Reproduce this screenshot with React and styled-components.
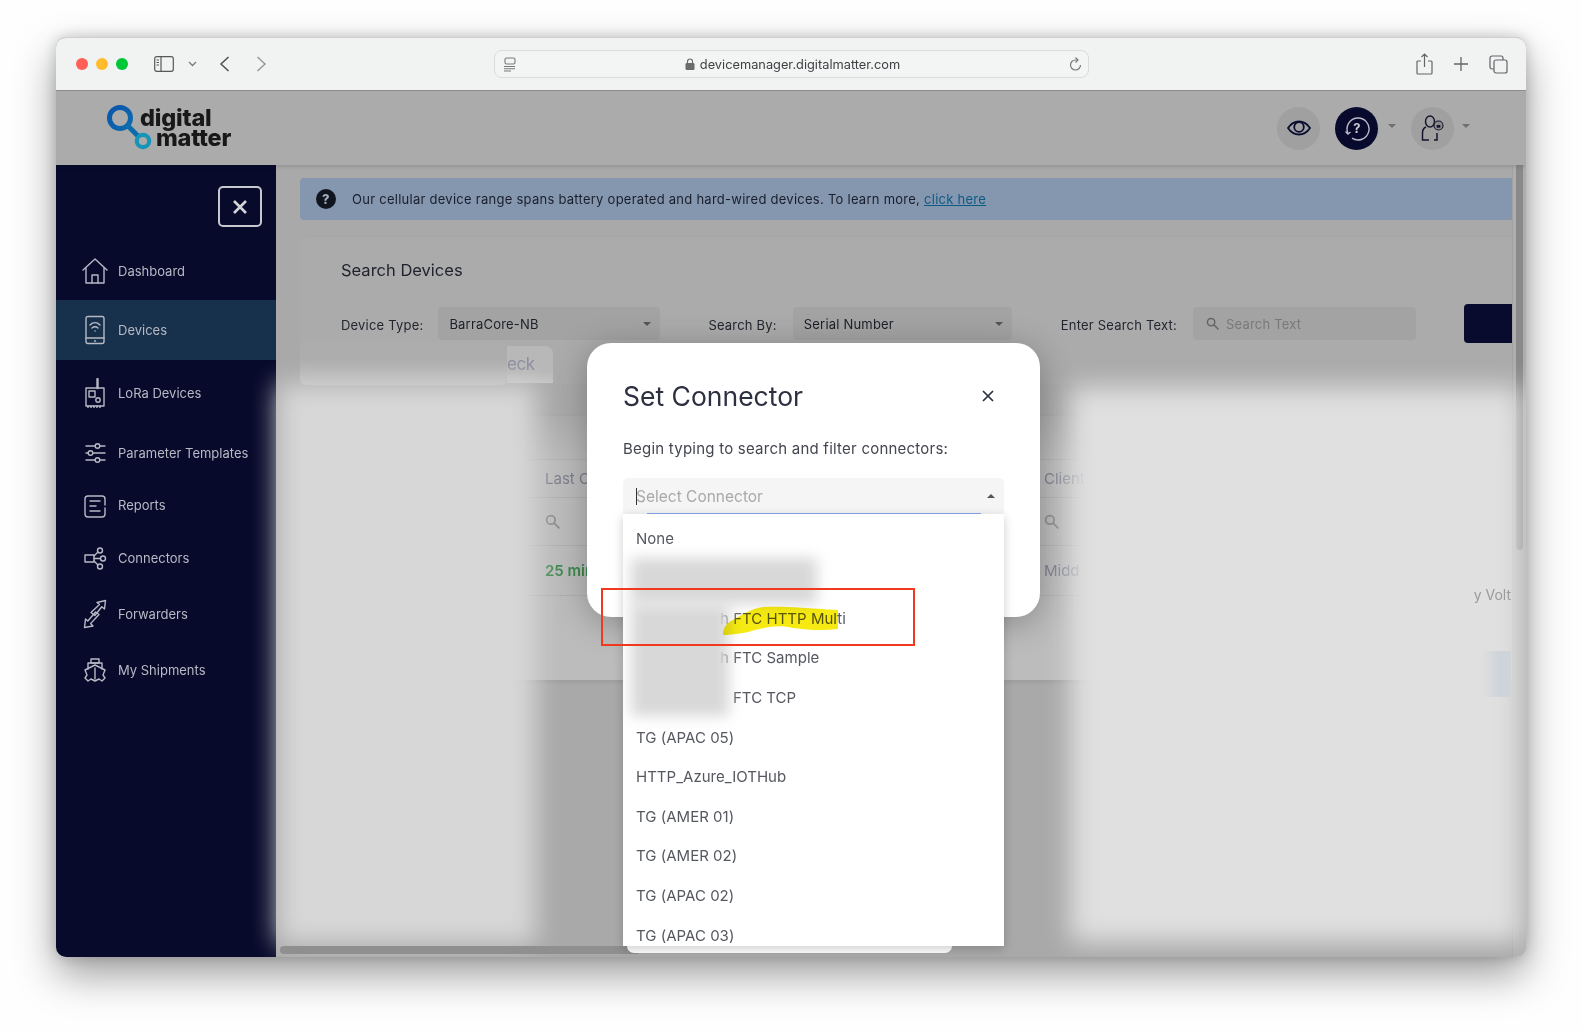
import React from "react";
import styled, { createGlobalStyle } from "styled-components";

const Global = createGlobalStyle`
  html, body {
    margin: 0;
    padding: 0;
    background: #fff;
    font-family: Inter, "Open Sans", "Liberation Sans", sans-serif;
  }
  * { box-sizing: border-box; }
`;

const Page = styled.div`
  width: 1582px;
  height: 1031px;
  padding: 37px 56px 0;
  background: #fefefe;
  overflow: hidden;
`;

const Window = styled.div`
  position: relative;
  width: 1470px;
  height: 920px;
  border-radius: 10px;
  overflow: hidden;
  display: flex;
  flex-direction: column;
  background: #b4b4b4;
`;

const WindowShadow = styled.div`
  width: 1470px;
  height: 920px;
  border-radius: 10px;
  box-shadow: 0 18px 42px rgba(0, 0, 0, 0.38), 0 0 14px rgba(0, 0, 0, 0.18);
`;

const Chrome = styled.div`
  height: 54px;
  flex: none;
  display: flex;
  align-items: center;
  background: #f1f3f2;
  border-bottom: 1px solid #8e8e8e;
  border-top: 1px solid #cfd1d0;
  border-radius: 10px 10px 0 0;
  padding: 0 0 0 20px;
  position: relative;
`;

const Lights = styled.div`
  display: flex;
  gap: 8px;
  margin-right: 26px;
`;

const Light = styled.span`
  width: 12px;
  height: 12px;
  border-radius: 50%;
  background: ${(p) => p.$color};
`;

const ChromeIcon = styled.svg`
  flex: none;
  margin-left: ${(p) => p.$ml || 0}px;
  display: block;
`;

const UrlBar = styled.div`
  position: absolute;
  left: 438px;
  top: 12px;
  width: 595px;
  height: 28px;
  border: 1px solid #d9dcdb;
  border-radius: 8px;
  background: #f3f5f4;
  display: flex;
  align-items: center;
  justify-content: center;
  gap: 5px;
  padding-left: 2px;
  font-size: 12.8px;
  color: #3d3f42;
`;

const UrlLeft = styled.span`
  position: absolute;
  left: 8px;
  top: 6px;
  display: flex;
`;

const UrlRight = styled.span`
  position: absolute;
  right: 5px;
  top: 5px;
  display: flex;
`;

const ChromeRight = styled.div`
  margin-left: auto;
  margin-right: 18px;
  display: flex;
  align-items: center;
  gap: 20px;
`;

const AppHeader = styled.header`
  height: 74px;
  flex: none;
  background: #ababab;
  display: flex;
  align-items: center;
  padding: 0 56px 0 50px;
  box-shadow: 0 2px 4px rgba(0, 0, 0, 0.12);
  position: relative;
  z-index: 2;
`;

const Logo = styled.div`
  display: flex;
  align-items: flex-start;
  position: relative;
  width: 130px;
  height: 48px;
`;

const LogoText = styled.div`
  position: absolute;
  left: ${(p) => p.$left}px;
  top: ${(p) => p.$top}px;
  font-family: Inter, sans-serif;
  font-weight: 800;
  font-size: 23.5px;
  line-height: 19px;
  letter-spacing: -0.2px;
  color: #181818;
`;

const HeaderRight = styled.div`
  margin-left: auto;
  display: flex;
  align-items: center;
`;

const RoundButton = styled.div`
  width: 43px;
  height: 43px;
  border-radius: 50%;
  background: ${(p) => (p.$dark ? "#080a2d" : "#a0a0a0")};
  display: flex;
  align-items: center;
  justify-content: center;
  margin-left: ${(p) => p.$ml || 0}px;
`;

const Caret = styled.span`
  width: 0;
  height: 0;
  margin: -4px 0 0 ${(p) => p.$ml || 10}px;
  border-left: 4px solid transparent;
  border-right: 4px solid transparent;
  border-top: 4px solid #6f6f6f;
`;

const Body = styled.div`
  flex: 1;
  display: flex;
  min-height: 0;
`;

const Sidebar = styled.nav`
  width: 220px;
  flex: none;
  background: #070a2b;
  display: flex;
  flex-direction: column;
`;

const SidebarTop = styled.div`
  height: 76px;
  padding: 21px 14px 0 0;
  display: flex;
  justify-content: flex-end;
`;

const CloseBox = styled.div`
  width: 44px;
  height: 41px;
  border: 2px solid #c8c9cf;
  border-radius: 5px;
  display: flex;
  align-items: center;
  justify-content: center;
`;

const NavItem = styled.div`
  height: ${(p) => p.$h}px;
  display: flex;
  align-items: center;
  padding-left: 26px;
  gap: 10px;
  font-size: 13px;
  color: #b7b9c4;
  background: ${(p) => (p.$active ? "#17304c" : "transparent")};
`;

const NavIcon = styled.svg`
  width: 26px;
  height: 30px;
  flex: none;
  fill: none;
  stroke: #b7b9c4;
  stroke-width: 1.4;
  stroke-linecap: round;
  stroke-linejoin: round;
`;

const Content = styled.main`
  flex: 1;
  display: flex;
  flex-direction: column;
  padding: 13px 0 0 24px;
  background: #a9a9a9;
  min-width: 0;
`;

const Banner = styled.div`
  height: 42px;
  flex: none;
  background: #8497ae;
  border-radius: 4px 0 0 4px;
  display: flex;
  align-items: center;
  padding-left: 16px;
  gap: 16px;
  font-size: 13px;
  letter-spacing: 0.26px;
  color: #1a1e2c;
  a {
    color: #0d5a86;
    text-decoration: underline;
  }
`;

const HelpDot = styled.span`
  width: 20px;
  height: 20px;
  border-radius: 50%;
  background: #11151f;
  color: #a4b0c0;
  font-size: 13px;
  font-weight: 800;
  display: flex;
  align-items: center;
  justify-content: center;
`;

const SearchCard = styled.section`
  margin-top: 16px;
  height: 148px;
  flex: none;
  background: #ababab;
  border-radius: 8px 0 0 0;
  border-top: 1px solid #a6a6a6;
  padding: 18px 0 0 41px;
`;

const CardTitle = styled.h2`
  margin: 0 0 19px;
  font-size: 16.5px;
  line-height: 30px;
  font-weight: 400;
  color: #20232e;
`;

const FilterRow = styled.div`
  display: flex;
  align-items: center;
`;

const FilterLabel = styled.label`
  font-size: 13px;
  letter-spacing: 0.2px;
  color: #23262f;
  padding-top: 2px;
  margin-left: ${(p) => p.$ml || 0}px;
  margin-right: ${(p) => p.$mr}px;
`;

const SelectBox = styled.div`
  width: ${(p) => p.$w}px;
  height: 33px;
  background: #a3a3a3;
  border-radius: 4px;
  display: flex;
  align-items: center;
  justify-content: space-between;
  padding: 0 9px 0 11px;
  font-size: 13px;
  letter-spacing: 0.2px;
  color: #1c1f28;
`;

const SelectArrow = styled.span`
  width: 0;
  height: 0;
  border-left: 4px solid transparent;
  border-right: 4px solid transparent;
  border-top: 4px solid #555;
`;

const SearchField = styled(SelectBox)`
  justify-content: flex-start;
  gap: 7px;
  padding-left: 13px;
  color: #797979;
`;

const SearchGo = styled.div`
  width: 48px;
  height: 39px;
  margin-left: 48px;
  background: #090b2e;
  border-radius: 4px 0 0 4px;
`;

const TableCard = styled.section`
  margin-top: 32px;
  height: 264px;
  flex: none;
  background: linear-gradient(#acacac, #bcbcbc 18%, #bcbcbc);
  box-shadow: 0 2px 5px rgba(0, 0, 0, 0.08);
  display: flex;
  flex-direction: column;
  justify-content: flex-end;
`;

const TableRow = styled.div`
  height: ${(p) => p.$h}px;
  flex: none;
  display: grid;
  grid-template-columns: 245px 499px 1fr;
  align-items: center;
  border-top: 1px solid #b0b0b0;
  font-size: 15px;
  color: #7d7f8e;
`;

const TableCell = styled.div`
  grid-column: ${(p) => p.$col};
  display: flex;
  color: ${(p) => p.$color || "inherit"};
  font-weight: ${(p) => p.$weight || 400};
`;

const ScrollTrack = styled.div`
  width: 14px;
  flex: none;
  background: #aeaeae;
  border-left: 1px solid #a2a2a2;
  padding: 0 3px;
`;

const ScrollThumb = styled.div`
  height: 385px;
  background: #8a8a8a;
  border-radius: 0 0 4px 4px;
`;

/* smudges the screenshot's author painted over the page */
const LeftSmear = styled.div`
  position: absolute;
  left: 222px;
  top: 347px;
  width: 258px;
  height: 560px;
  background: #d7d7d7;
  filter: blur(13px);
`;

const RightSmear = styled.div`
  position: absolute;
  left: 1014px;
  top: 350px;
  width: 452px;
  height: 555px;
  background: #e0e0e0;
  filter: blur(13px);
`;

const CardPatch = styled.div`
  position: absolute;
  left: 244px;
  top: 303px;
  width: 207px;
  height: 45px;
  background: linear-gradient(#acacac, #adadad 40%, #bcbcbc);
  border-radius: 0 0 6px 6px;
`;

const GhostButton = styled.div`
  position: absolute;
  left: 451px;
  top: 309px;
  width: 46px;
  height: 37px;
  background: linear-gradient(#b8b8b8, #b8b8b8 70%, #c4c4c4);
  border-radius: 0 8px 0 0;
  font-size: 17px;
  letter-spacing: -0.4px;
  color: #8b8d9e;
  line-height: 37px;
`;

const EdgeText = styled.div`
  position: absolute;
  right: 15px;
  top: 549px;
  font-size: 14px;
  color: #9a9a9a;
  white-space: nowrap;
`;

const EdgeRow = styled.div`
  position: absolute;
  left: 1425px;
  top: 614px;
  width: 30px;
  height: 46px;
  background: linear-gradient(90deg, rgba(205, 210, 216, 0), #cfd4da 60%);
`;

const BottomBar = styled.div`
  position: absolute;
  left: 224px;
  bottom: 3px;
  width: 360px;
  height: 8px;
  background: #8f8f8f;
  border-radius: 4px;
`;

const Modal = styled.div`
  position: absolute;
  left: 531px;
  top: 306px;
  width: 453px;
  height: 274px;
  background: #fff;
  border-radius: 24px;
  padding: 36px 36px 0;
  box-shadow: 0 6px 34px rgba(0, 0, 0, 0.28);
`;

const ModalHead = styled.div`
  display: flex;
  align-items: center;
  justify-content: space-between;
  height: 34px;
  margin-bottom: 26px;
  padding-right: 10px;
`;

const ModalTitle = styled.h3`
  margin: 0;
  font-size: 26.5px;
  font-weight: 400;
  color: #2c3040;
`;

const ModalHint = styled.p`
  margin: 0 0 19px;
  font-size: 15px;
  line-height: 20px;
  letter-spacing: 0.23px;
  color: #444650;
`;

const SelectWrap = styled.div`
  position: relative;
  width: 381px;
`;

const ConnectorInput = styled.div`
  height: 36px;
  background: #f5f5f5;
  border-radius: 5px 5px 0 0;
  display: flex;
  align-items: center;
  padding: 0 9px 0 13px;
  font-size: 15.5px;
  color: #a9a9a9;
  position: relative;
  &::after {
    content: "";
    position: absolute;
    left: 24px;
    right: 23px;
    bottom: -1px;
    height: 2px;
    background: #86a6ee;
  }
`;

const TextCaret = styled.span`
  width: 1px;
  height: 17px;
  background: #333;
  margin-right: -1px;
`;

const UpArrow = styled.span`
  margin-left: auto;
  width: 0;
  height: 0;
  border-left: 4px solid transparent;
  border-right: 4px solid transparent;
  border-bottom: 4px solid #555;
`;

const Dropdown = styled.div`
  position: relative;
  height: 432px;
  overflow: hidden;
  background: #fff;
  padding-top: 5px;
  box-shadow: 0 3px 10px rgba(0, 0, 0, 0.2);
`;

const Option = styled.div`
  height: 39.65px;
  display: flex;
  align-items: center;
  padding-left: ${(p) => p.$pl || 13}px;
  font-size: 15px;
  letter-spacing: 0.02px;
  color: #565860;
`;

const OptionSmudge = styled.div`
  position: absolute;
  left: ${(p) => p.$left}px;
  top: ${(p) => p.$top}px;
  width: ${(p) => p.$w}px;
  height: ${(p) => p.$h}px;
  background: #d8d8d8;
  filter: blur(7px);
`;

const DropdownFoot = styled.div`
  position: absolute;
  left: 571px;
  top: 909px;
  width: 325px;
  height: 7px;
  background: #fff;
  border-radius: 0 0 10px 10px;
`;

const RedBox = styled.div`
  position: absolute;
  left: 545px;
  top: 551px;
  width: 314px;
  height: 58px;
  border: 2px solid #f0391f;
  pointer-events: none;
`;

const Highlighter = styled.svg`
  position: absolute;
  left: 667px;
  top: 566px;
  mix-blend-mode: multiply;
  pointer-events: none;
`;

const Caption = styled.span`
  white-space: nowrap;
`;

const SearchGlyph = ({ color = "#666", size = 13 }) => (
  <svg width={size} height={size} viewBox="0 0 14 14" fill="none" stroke={color} strokeWidth="1.6">
    <circle cx="5.5" cy="5.5" r="4" />
    <path d="M8.5 8.5 13 13" strokeLinecap="round" />
  </svg>
);

const navItems = [
  {
    label: "Dashboard",
    h: 59,
    icon: (
      <>
        <path d="M1 14 13 3l12 11" />
        <path d="M4 12v15h18V12" />
        <path d="M10 27v-8h6v8" />
      </>
    ),
  },
  {
    label: "Devices",
    h: 60,
    active: true,
    icon: (
      <>
        <rect x="4" y="1.5" width="18" height="27" rx="2" />
        <path d="M4 23h18" />
        <path d="M12.5 26h1" />
        <path d="M8 10c3-3 7-3 10 0M10 13c2-1.7 4-1.7 6 0" />
        <path d="M13 16h.1" />
      </>
    ),
  },
  {
    label: "LoRa Devices",
    h: 65,
    icon: (
      <>
        <path d="M15.5 1v9" strokeWidth="2.4" />
        <path d="M4 10h18v18H4z" />
        <rect x="7" y="13" width="6" height="6" />
        <circle cx="16" cy="22" r="2.2" />
        <path d="M6 28v2M9 28v2M12 28v2M15 28v2M18 28v2" />
      </>
    ),
  },
  {
    label: "Parameter Templates",
    h: 56,
    icon: (
      <>
        <path d="M4 8h9m5 0h5" />
        <circle cx="15.5" cy="8" r="2.3" />
        <path d="M4 15h2m5 0h12" />
        <circle cx="8.5" cy="15" r="2.3" />
        <path d="M4 22h9m5 0h5" />
        <circle cx="15.5" cy="22" r="2.3" />
      </>
    ),
  },
  {
    label: "Reports",
    h: 48,
    icon: (
      <>
        <path d="M23 18v6a3 3 0 0 1-3 3H6a3 3 0 0 1-3-3V9a3 3 0 0 1 3-3h14a3 3 0 0 1 3 3v6" />
        <path d="M8 11h10M8 16h6M8 21h10" />
      </>
    ),
  },
  {
    label: "Connectors",
    h: 58,
    icon: (
      <>
        <path d="M3 12h9v7H3z" />
        <path d="M12 13l4-4M12 15.5h6M12 18l4 4" />
        <circle cx="18" cy="7.5" r="2.5" />
        <circle cx="21" cy="15.5" r="2.5" />
        <circle cx="18" cy="23.5" r="2.5" />
      </>
    ),
  },
  {
    label: "Forwarders",
    h: 54,
    icon: (
      <>
        <path d="M15 3.5 23.5 1.5 22.5 10 19.8 7.8 12.8 16.5 9 13.5 17.5 5.5z" />
        <path d="M2.5 28.5 11 27 8.6 24.6 17 15.5 13.6 13 5.8 22 3.5 20z" />
      </>
    ),
  },
  {
    label: "My Shipments",
    h: 58,
    icon: (
      <>
        <path d="M9 4h8v4H9z" />
        <path d="M6 14V8h14v6" />
        <path d="M13 10 3 15l2 5-2 3 3 3 3-2 4 2 4-2 3 2 3-3-2-3 2-5z" />
        <path d="M13 13v11" />
      </>
    ),
  },
];

const options = [
  { text: "None" },
  { text: "" },
  { text: "h FTC HTTP Multi", pl: 97 },
  { text: "h FTC Sample", pl: 97 },
  { text: "FTC TCP", pl: 110 },
  { text: "TG (APAC 05)" },
  { text: "HTTP_Azure_IOTHub" },
  { text: "TG (AMER 01)" },
  { text: "TG (AMER 02)" },
  { text: "TG (APAC 02)" },
  { text: "TG (APAC 03)" },
];

const BrowserChrome = () => (
  <Chrome>
    <Lights>
      <Light $color="#ff5f57" />
      <Light $color="#febc2e" />
      <Light $color="#00c638" />
    </Lights>
    <ChromeIcon width="20" height="16" viewBox="0 0 20 16" fill="none" stroke="#55585a" strokeWidth="1.2">
      <rect x="0.7" y="0.7" width="18.6" height="14.6" rx="2" />
      <path d="M7 1v14M2.5 4h2.5M2.5 6.5h2.5M2.5 9h2.5" />
    </ChromeIcon>
    <ChromeIcon $ml="14" width="9" height="6" viewBox="0 0 9 6" fill="none" stroke="#77797b" strokeWidth="1.3">
      <path d="M1 1l3.5 3.5L8 1" />
    </ChromeIcon>
    <ChromeIcon $ml="22" width="11" height="16" viewBox="0 0 11 16" fill="none" stroke="#4d5052" strokeWidth="1.5">
      <path d="M9.5 1 2 8l7.5 7" />
    </ChromeIcon>
    <ChromeIcon $ml="26" width="11" height="16" viewBox="0 0 11 16" fill="none" stroke="#97999b" strokeWidth="1.5">
      <path d="M1.5 1 9 8l-7.5 7" />
    </ChromeIcon>
    <UrlBar>
      <UrlLeft>
        <svg width="14" height="15" viewBox="0 0 14 15" fill="none" stroke="#77797b" strokeWidth="1.1">
          <rect x="2" y="1" width="10" height="6" rx="1.5" />
          <path d="M1 9.5h11M1 11.8h11M1 14h7" />
        </svg>
      </UrlLeft>
      <svg width="10" height="12" viewBox="0 0 10 12">
        <rect x="0.5" y="5" width="9" height="7" rx="1.2" fill="#6a6c6e" />
        <path d="M2.5 5V3.5a2.5 2.5 0 0 1 5 0V5" fill="none" stroke="#6a6c6e" strokeWidth="1.2" />
      </svg>
      <Caption>devicemanager.digitalmatter.com</Caption>
      <UrlRight>
        <svg width="15" height="16" viewBox="0 0 15 16" fill="none" stroke="#77797b" strokeWidth="1.2">
          <path d="M12.5 9a5 5 0 1 1-5-5h2" />
          <path d="M7.5 1.5 10 4 7.5 6.5" />
        </svg>
      </UrlRight>
    </UrlBar>
    <ChromeRight>
      <svg width="17" height="22" viewBox="0 0 17 22" fill="none" stroke="#626466" strokeWidth="1.2">
        <path d="M5 8H2a1 1 0 0 0-1 1v11a1 1 0 0 0 1 1h13a1 1 0 0 0 1-1V9a1 1 0 0 0-1-1h-3" />
        <path d="M8.5 14V1M5.5 4l3-3 3 3" />
      </svg>
      <svg width="16" height="16" viewBox="0 0 16 16" fill="none" stroke="#626466" strokeWidth="1.3">
        <path d="M8 1v14M1 8h14" />
      </svg>
      <svg width="19" height="19" viewBox="0 0 19 19" fill="none" stroke="#626466" strokeWidth="1.2">
        <rect x="5" y="5" width="13" height="13" rx="2" />
        <path d="M5 14H3a2 2 0 0 1-2-2V3a2 2 0 0 1 2-2h9a2 2 0 0 1 2 2v2" />
      </svg>
    </ChromeRight>
  </Chrome>
);

const Header = () => (
  <AppHeader>
    <Logo>
      <svg width="50" height="48" viewBox="0 0 50 48" fill="none">
        <defs>
          <linearGradient id="ring" x1="0" y1="0" x2="1" y2="1">
            <stop offset="0" stopColor="#0b55ad" />
            <stop offset="1" stopColor="#0d6cae" />
          </linearGradient>
        </defs>
        <circle cx="14" cy="14" r="10.5" stroke="url(#ring)" strokeWidth="5" />
        <path d="M21 21 33 33" stroke="#0d6cae" strokeWidth="5" />
        <circle cx="37" cy="37" r="6.2" stroke="#1595b7" strokeWidth="4.2" />
      </svg>
      <LogoText $left={34} $top={4}>digital</LogoText>
      <LogoText $left={50} $top={24}>matter</LogoText>
    </Logo>
    <HeaderRight>
      <RoundButton>
        <svg width="24" height="16" viewBox="0 0 24 16" fill="none" stroke="#0b0e30" strokeWidth="1.8">
          <path d="M1 8c3-4.5 6.5-6.5 11-6.5S20 3.5 23 8c-3 4.5-6.5 6.5-11 6.5S4 12.5 1 8z" />
          <circle cx="12" cy="7" r="4.8" />
        </svg>
      </RoundButton>
      <RoundButton $dark $ml={15}>
        <svg width="26" height="26" viewBox="0 0 26 26" fill="none" stroke="#b9bbc6" strokeWidth="1.4">
          <path d="M4 18.5a11 11 0 1 1 4 4.7" />
          <path d="M1.5 16.5 4 19l2.5-2" />
          <text x="13" y="17.5" textAnchor="middle" fontSize="13" fontWeight="700" fill="#c7c9d2" stroke="none" fontFamily="Inter, sans-serif">?</text>
        </svg>
      </RoundButton>
      <Caret />
      <RoundButton $ml={15}>
        <svg width="24" height="26" viewBox="0 0 24 26" fill="none" stroke="#14162f" strokeWidth="1.5">
          <ellipse cx="9" cy="6.5" rx="4.5" ry="5.5" />
          <path d="M5 12c-2.5 1-3.5 3-3.5 6v7H8M13 25h3v-7" />
          <circle cx="17.5" cy="10.5" r="4.5" fill="#8c8c8c" strokeWidth="1.1" />
          <rect x="15.7" y="10" width="3.6" height="2.7" fill="#14162f" stroke="none" />
        </svg>
      </RoundButton>
      <Caret $ml={8} />
    </HeaderRight>
  </AppHeader>
);

const Nav = () => (
  <Sidebar>
    <SidebarTop>
      <CloseBox>
        <svg width="16" height="16" viewBox="0 0 16 16" stroke="#d3d4d8" strokeWidth="2.6">
          <path d="M2 2l12 12M14 2 2 14" />
        </svg>
      </CloseBox>
    </SidebarTop>
    {navItems.map((item) => (
      <NavItem key={item.label} $h={item.h} $active={item.active}>
        <NavIcon viewBox="0 0 26 30">{item.icon}</NavIcon>
        {item.label}
      </NavItem>
    ))}
  </Sidebar>
);

const App = () => (
  <Page>
    <Global />
    <WindowShadow>
      <Window>
        <BrowserChrome />
        <Header />
        <Body>
          <Nav />
          <Content>
            <Banner>
              <HelpDot>?</HelpDot>
              <span>
                Our cellular device range spans battery operated and hard-wired devices. To learn more,{" "}
                <a href="#more">click here</a>
              </span>
            </Banner>
            <SearchCard>
              <CardTitle>Search Devices</CardTitle>
              <FilterRow>
                <FilterLabel $mr={15}>Device Type:</FilterLabel>
                <SelectBox $w={222}>
                  BarraCore-NB
                  <SelectArrow />
                </SelectBox>
                <FilterLabel $ml={48} $mr={16}>Search By:</FilterLabel>
                <SelectBox $w={219}>
                  Serial Number
                  <SelectArrow />
                </SelectBox>
                <FilterLabel $ml={49} $mr={16}>Enter Search Text:</FilterLabel>
                <SearchField $w={223}>
                  <SearchGlyph />
                  Search Text
                </SearchField>
                <SearchGo />
              </FilterRow>
            </SearchCard>
            <TableCard>
              <TableRow $h={38}>
                <TableCell $col={2}>Last C</TableCell>
                <TableCell $col={3}>Client</TableCell>
              </TableRow>
              <TableRow $h={48}>
                <TableCell $col={2}>
                  <SearchGlyph color="#8b8b8b" size={15} />
                </TableCell>
                <TableCell $col={3}>
                  <SearchGlyph color="#8b8b8b" size={15} />
                </TableCell>
              </TableRow>
              <TableRow $h={50}>
                <TableCell $col={2} $color="#3f8a4e" $weight={600}>25 min</TableCell>
                <TableCell $col={3}>Midd</TableCell>
              </TableRow>
              <TableRow $h={85} />
            </TableCard>
          </Content>
          <ScrollTrack>
            <ScrollThumb />
          </ScrollTrack>
        </Body>

        <CardPatch />
        <GhostButton>eck</GhostButton>
        <LeftSmear />
        <RightSmear />
        <EdgeRow />
        <EdgeText>y Volt</EdgeText>
        <BottomBar />

        <DropdownFoot />
        <Modal>
          <ModalHead>
            <ModalTitle>Set Connector</ModalTitle>
            <svg width="12" height="12" viewBox="0 0 12 12" stroke="#2c3040" strokeWidth="1.7">
              <path d="M1 1l10 10M11 1 1 11" />
            </svg>
          </ModalHead>
          <ModalHint>Begin typing to search and filter connectors:</ModalHint>
          <SelectWrap>
            <ConnectorInput>
              <TextCaret />
              Select Connector
              <UpArrow />
            </ConnectorInput>
            <Dropdown>
              {options.map((o, i) => (
                <Option key={i} $pl={o.pl}>{o.text}</Option>
              ))}
              <OptionSmudge $left={8} $top={44} $w={186} $h={46} />
              <OptionSmudge $left={8} $top={90} $w={98} $h={112} />
            </Dropdown>
          </SelectWrap>
        </Modal>
        <Highlighter width="116" height="33" viewBox="0 0 116 33">
          <path d="M0 32C0 26 2 22 8 18 18 12 30 5 40 4 60 3 80 5 115 7V26C100 28 85 27 70 25 55 21 40 25 25 29 15 31 8 32 0 32z" fill="#f6ea12" />
        </Highlighter>
        <RedBox />
      </Window>
    </WindowShadow>
  </Page>
);

export default App;
